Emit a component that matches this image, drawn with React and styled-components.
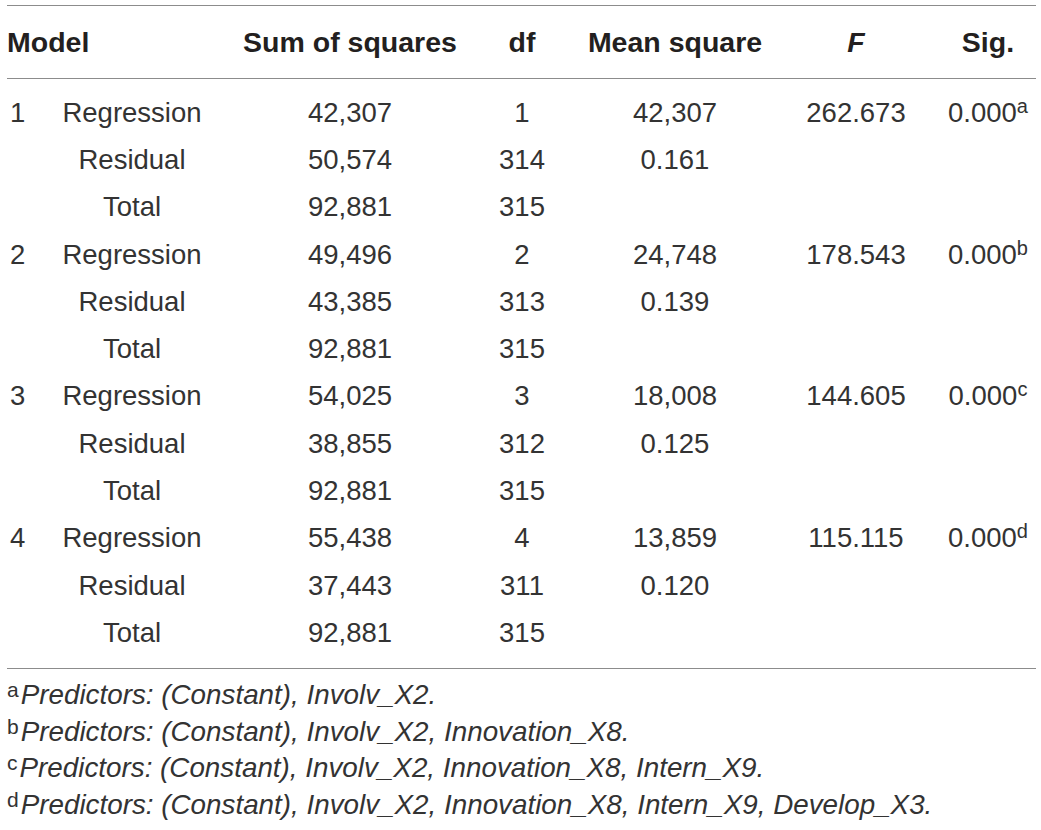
import React from "react";
import styled, { createGlobalStyle } from "styled-components";

const GlobalStyle = createGlobalStyle`
  html, body {
    margin: 0;
    padding: 0;
    background: #fff;
  }
  body {
    font-family: "Liberation Sans", Arial, Helvetica, sans-serif;
    color: #231f20;
  }
`;

const Wrapper = styled.div`
  width: 1041px;
  padding: 5px 5px 0 7px;
  box-sizing: border-box;
`;

const COLS = "43px 164px 272px 72px 234px 128px 116px";

const Header = styled.div`
  display: grid;
  grid-template-columns: ${COLS};
  height: 72px;
  align-items: center;
  border-top: 1.5px solid #8c8c8c;
  border-bottom: 1.5px solid #8c8c8c;
  font-size: 28.5px;
  font-weight: 700;
`;

const HeadCell = styled.div`
  text-align: ${(p) => p.$align || "center"};
  grid-column: ${(p) => p.$span || "auto"};
  padding-left: ${(p) => p.$pad || 0}px;
  font-style: ${(p) => (p.$italic ? "italic" : "normal")};
`;

const Body = styled.div`
  padding: 10px 0 11px;
  border-bottom: 1.5px solid #8c8c8c;
`;

const Row = styled.div`
  display: grid;
  grid-template-columns: ${COLS};
  height: 47.3px;
  align-items: center;
  font-size: 27.5px;
  color: #333;
`;

const Cell = styled.div`
  text-align: ${(p) => p.$align || "center"};
  padding-left: ${(p) => p.$pad || 0}px;
  white-space: nowrap;
`;

const Sup = styled.sup`
  font-size: 20px;
  vertical-align: 9px;
  line-height: 0;
`;

const Notes = styled.div`
  padding-top: 8px;
`;

const Note = styled.div`
  height: 36.7px;
  display: flex;
  align-items: center;
  font-size: 27.8px;
  color: #333;
  white-space: nowrap;
`;

const NoteMark = styled.span`
  font-size: 21px;
  position: relative;
  top: -5px;
  margin-right: 2px;
`;

const NoteText = styled.span`
  font-style: italic;
`;

const models = [
  { n: "1", reg: ["42,307", "1", "42,307", "262.673", "a"], res: ["50,574", "314", "0.161"] },
  { n: "2", reg: ["49,496", "2", "24,748", "178.543", "b"], res: ["43,385", "313", "0.139"] },
  { n: "3", reg: ["54,025", "3", "18,008", "144.605", "c"], res: ["38,855", "312", "0.125"] },
  { n: "4", reg: ["55,438", "4", "13,859", "115.115", "d"], res: ["37,443", "311", "0.120"] },
];

const notes = [
  ["a", "Predictors: (Constant), Involv_X2."],
  ["b", "Predictors: (Constant), Involv_X2, Innovation_X8."],
  ["c", "Predictors: (Constant), Involv_X2, Innovation_X8, Intern_X9."],
  ["d", "Predictors: (Constant), Involv_X2, Innovation_X8, Intern_X9, Develop_X3."],
];

export default function App() {
  return (
    <Wrapper>
      <GlobalStyle />
      <Header>
        <HeadCell $span="1 / 3" $align="left">Model</HeadCell>
        <HeadCell>Sum of squares</HeadCell>
        <HeadCell>df</HeadCell>
        <HeadCell>Mean square</HeadCell>
        <HeadCell $italic>F</HeadCell>
        <HeadCell $pad={20}>Sig.</HeadCell>
      </Header>
      <Body>
        {models.map((m) => (
          <React.Fragment key={m.n}>
            <Row>
              <Cell $align="left" $pad={3}>{m.n}</Cell>
              <Cell>Regression</Cell>
              <Cell>{m.reg[0]}</Cell>
              <Cell>{m.reg[1]}</Cell>
              <Cell>{m.reg[2]}</Cell>
              <Cell>{m.reg[3]}</Cell>
              <Cell $pad={20}>
                0.000<Sup>{m.reg[4]}</Sup>
              </Cell>
            </Row>
            <Row>
              <Cell />
              <Cell>Residual</Cell>
              <Cell>{m.res[0]}</Cell>
              <Cell>{m.res[1]}</Cell>
              <Cell>{m.res[2]}</Cell>
              <Cell />
              <Cell />
            </Row>
            <Row>
              <Cell />
              <Cell>Total</Cell>
              <Cell>92,881</Cell>
              <Cell>315</Cell>
              <Cell />
              <Cell />
              <Cell />
            </Row>
          </React.Fragment>
        ))}
      </Body>
      <Notes>
        {notes.map(([mark, text]) => (
          <Note key={mark}>
            <NoteMark>{mark}</NoteMark>
            <NoteText>{text}</NoteText>
          </Note>
        ))}
      </Notes>
    </Wrapper>
  );
}
